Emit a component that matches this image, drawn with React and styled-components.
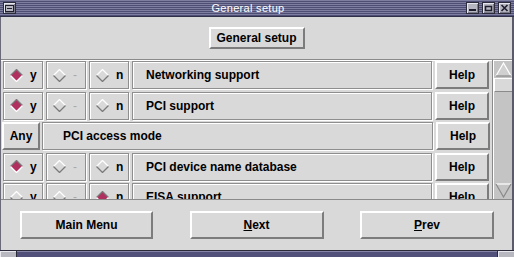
import React from "react";
import styled, { createGlobalStyle } from "styled-components";

const Global = createGlobalStyle`
  html, body { margin: 0; padding: 0; background: #d9d9d9; }
  body { font-family: "Liberation Sans", Arial, sans-serif; }
`;

const Window = styled.div`
  width: 514px;
  height: 257px;
  display: flex;
  flex-direction: column;
  overflow: hidden;
  background: #d9d9d9;
`;

const TitleBar = styled.div`
  height: 17px;
  flex: none;
  display: flex;
  align-items: center;
  padding: 0 3px 0 3px;
  box-sizing: border-box;
  background: repeating-linear-gradient(to bottom, #7e7ea0 0 1px, #4e4e74 1px 2px);
  border-bottom: 1px solid #303048;
`;

const TitleText = styled.div`
  flex: 1;
  text-align: center;
  color: #ffffff;
  font-size: 11px;
  letter-spacing: 0.3px;
  line-height: 16px;
  padding-left: 14px;
`;

const TitleButtons = styled.div`
  display: flex;
  gap: 3px;
`;

const TButton = styled.div`
  width: 13px;
  height: 12px;
  box-sizing: border-box;
  background: #b6b6c0;
  border: 1px solid #2c2c3c;
  box-shadow: inset 1px 1px 0 #e6e6ee, inset -1px -1px 0 #7a7a88;
  display: flex;
  align-items: center;
  justify-content: center;
`;

const Body = styled.div`
  flex: 1;
  display: flex;
  flex-direction: column;
  border-left: 1px solid #6a6a78;
  border-right: 2px solid #5a5a6a;
  min-height: 0;
`;

const Header = styled.div`
  height: 42px;
  flex: none;
  display: flex;
  align-items: center;
  justify-content: center;
`;

const Raised = styled.button`
  font-family: "Liberation Sans", Arial, sans-serif;
  font-weight: bold;
  font-size: 12px;
  color: #000;
  background: #d9d9d9;
  border: 2px solid;
  border-color: #ffffff #7c7c7c #7c7c7c #ffffff;
  padding: 0;
  margin: 0;
  box-sizing: border-box;
  display: flex;
  align-items: center;
  justify-content: center;
  width: ${(p) => p.$w}px;
  height: ${(p) => p.$h}px;
  flex: none;
  cursor: default;
`;

const ListFrame = styled.div`
  height: 141px;
  flex: none;
  display: flex;
  border-top: 1px solid #8a8a8a;
  border-bottom: 1px solid #8a8a8a;
  box-sizing: border-box;
`;

const List = styled.div`
  flex: 1;
  overflow: hidden;
  display: flex;
  flex-direction: column;
  gap: 2.5px;
  padding: 1px 0 0 2px;
  box-shadow: inset 0 1px 0 #ffffff;
`;

const Row = styled.div`
  display: flex;
  gap: 3px;
  height: 28px;
  flex: none;
`;

const Etched = styled.div`
  box-sizing: border-box;
  height: 28px;
  border: 1px solid #8e8e8e;
  box-shadow: inset 1px 1px 0 #ffffff, 1px 1px 0 #ffffff;
  display: flex;
  align-items: center;
  font-weight: bold;
  font-size: 12px;
  color: #000;
  flex: none;
`;

const RadioBox = styled(Etched)`
  width: 40px;
  padding-left: 6px;
  gap: 7px;
`;

const RadioText = styled.span`
  color: ${(p) => (p.$dim ? "#a8a8a8" : "#000")};
  font-weight: ${(p) => (p.$dim ? "normal" : "bold")};
`;

const Label = styled(Etched)`
  padding-left: ${(p) => p.$pad}px;
  width: ${(p) => p.$w}px;
`;

const AnyButton = styled(Raised)`
  margin-left: -1px;
  margin-right: -1px;
`;

const Scrollbar = styled.div`
  width: 20px;
  flex: none;
  background: #c4c4c4;
  border-left: 1px solid #8a8a8a;
  box-shadow: inset 1px 1px 0 #ffffff;
  display: flex;
  flex-direction: column;
  padding: 1px 0 1px 1px;
  box-sizing: border-box;
`;

const Arrow = styled.div`
  height: 16px;
  flex: none;
  display: flex;
  align-items: center;
  justify-content: center;
`;

const Thumb = styled.div`
  height: 14px;
  margin-top: 1px;
  flex: none;
  background: #d9d9d9;
  border-top: 1px solid #ffffff;
  border-left: 1px solid #ffffff;
  border-bottom: 1px solid #8a8a8a;
  box-sizing: border-box;
`;

const Track = styled.div`
  flex: 1;
`;

const Footer = styled.div`
  flex: 1;
  display: flex;
  align-items: center;
  justify-content: space-between;
  padding: 0 18px 1px 19px;
`;

const BottomFrame = styled.div`
  height: 7px;
  flex: none;
  display: flex;
  gap: 1px;
  background: #2a2a3a;
  padding-top: 1px;
  box-sizing: border-box;
`;

const Handle = styled.div`
  width: ${(p) => p.$w}px;
  background: #b8b8c0;
  box-shadow: inset 1px 1px 0 #e8e8ee;
`;

const Bar = styled.div`
  flex: 1;
  background: #50507a;
  box-shadow: inset 0 1px 0 #8484a6;
`;

function Diamond({ on }) {
  return (
    <svg width="13" height="13" viewBox="0 0 13 13">
      <polygon
        points="6.5,0.5 12.5,6.5 6.5,12.5 0.5,6.5"
        fill={on ? "#b03060" : "#d9d9d9"}
      />
      <polyline
        points="0.5,6.5 6.5,0.5 12.5,6.5"
        fill="none"
        stroke={on ? "#7a7a7a" : "#ffffff"}
        strokeWidth="1.3"
      />
      <polyline
        points="0.5,6.5 6.5,12.5 12.5,6.5"
        fill="none"
        stroke={on ? "#ffffff" : "#7a7a7a"}
        strokeWidth="1.3"
      />
    </svg>
  );
}

function Radio({ on, text, dim }) {
  return (
    <RadioBox>
      <Diamond on={on} />
      <RadioText $dim={dim}>{text}</RadioText>
    </RadioBox>
  );
}

function TriRow({ sel, label }) {
  return (
    <Row>
      <Radio on={sel === "y"} text="y" />
      <Radio on={sel === "-"} text="-" dim />
      <Radio on={sel === "n"} text="n" />
      <Label $pad={13} $w={300}>{label}</Label>
      <Raised $w={54} $h={28}>Help</Raised>
    </Row>
  );
}

const rows = [
  { sel: "y", label: "Networking support" },
  { sel: "y", label: "PCI support" },
  { any: true, label: "PCI access mode" },
  { sel: "y", label: "PCI device name database" },
  { sel: "n", label: "EISA support" },
];

export default function App() {
  return (
    <Window>
      <Global />
      <TitleBar>
        <TButton>
          <svg width="9" height="7" viewBox="0 0 9 7">
            <rect x="0.5" y="0.5" width="8" height="6" fill="none" stroke="#1e1e2e" />
            <line x1="2" y1="3.5" x2="7" y2="3.5" stroke="#1e1e2e" />
          </svg>
        </TButton>
        <TitleText>General setup</TitleText>
        <TitleButtons>
          <TButton>
            <svg width="9" height="7" viewBox="0 0 9 7">
              <rect x="1" y="4" width="7" height="2" fill="#1e1e2e" />
            </svg>
          </TButton>
          <TButton>
            <svg width="9" height="7" viewBox="0 0 9 7">
              <rect x="1.5" y="1.5" width="6" height="4" fill="none" stroke="#1e1e2e" strokeWidth="1.5" />
            </svg>
          </TButton>
          <TButton>
            <svg width="9" height="8" viewBox="0 0 9 8">
              <path d="M1.5 1 L7.5 7 M7.5 1 L1.5 7" stroke="#1e1e2e" strokeWidth="1.6" />
            </svg>
          </TButton>
        </TitleButtons>
      </TitleBar>
      <Body>
        <Header>
          <Raised $w={96} $h={22}>General setup</Raised>
        </Header>
        <ListFrame>
          <List>
            {rows.map((r, i) =>
              r.any ? (
                <Row key={i}>
                  <AnyButton $w={38} $h={28}>Any</AnyButton>
                  <Label $pad={20} $w={391}>{r.label}</Label>
                  <Raised $w={54} $h={28}>Help</Raised>
                </Row>
              ) : (
                <TriRow key={i} sel={r.sel} label={r.label} />
              )
            )}
          </List>
          <Scrollbar>
            <Arrow>
              <svg width="17" height="15" viewBox="0 0 17 15">
                <polygon points="8.5,1 16,14 1,14" fill="#d0d0d0" />
                <polyline points="1,14 8.5,1 16,14" fill="none" stroke="#ffffff" strokeWidth="1.2" />
                <line x1="1" y1="14" x2="16" y2="14" stroke="#8a8a8a" strokeWidth="1.2" />
              </svg>
            </Arrow>
            <Thumb />
            <Track />
            <Arrow>
              <svg width="17" height="15" viewBox="0 0 17 15">
                <polygon points="1,1 16,1 8.5,14" fill="#c4c4c4" />
                <line x1="1" y1="1" x2="16" y2="1" stroke="#ffffff" strokeWidth="1.2" />
                <polyline points="1,1 8.5,14 16,1" fill="none" stroke="#8a8a8a" strokeWidth="1.2" />
              </svg>
            </Arrow>
          </Scrollbar>
        </ListFrame>
        <Footer>
          <Raised $w={133} $h={28}>Main Menu</Raised>
          <Raised $w={134} $h={28}><u>N</u>ext</Raised>
          <Raised $w={134} $h={28}><u>P</u>rev</Raised>
        </Footer>
      </Body>
      <BottomFrame>
        <Handle $w={16} />
        <Bar />
        <Handle $w={16} />
      </BottomFrame>
    </Window>
  );
}
